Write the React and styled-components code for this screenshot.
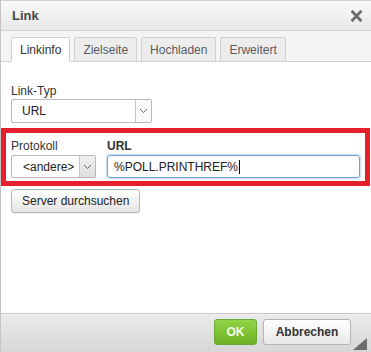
import React from "react";
import styled, { createGlobalStyle } from "styled-components";

const Global = createGlobalStyle`
  html, body { margin: 0; padding: 0; background: #fff; }
  body { font-family: "Liberation Sans", Arial, sans-serif; font-size: 12px; color: #333; }
  * { box-sizing: border-box; }
`;

const Dialog = styled.div`
  position: relative;
  width: 371px;
  height: 352px;
  display: flex;
  flex-direction: column;
  border-left: 1px solid #c4c4c4;
  border-top: 1px solid #cfcfcf;
  background: #fff;
  overflow: hidden;
`;

const TitleBar = styled.div`
  height: 30px;
  flex: none;
  display: flex;
  align-items: center;
  justify-content: space-between;
  padding: 0 9px 0 11px;
  background: linear-gradient(#f9f9f9, #e8e8e8);
  border-bottom: 1px solid #d2d2d2;
`;

const Title = styled.div`
  font-weight: bold;
  font-size: 13px;
  color: #474747;
`;

const Close = styled.svg`
  width: 11px;
  height: 12px;
  display: block;
`;

const TabBar = styled.div`
  height: 31px;
  flex: none;
  display: flex;
  align-items: flex-end;
  gap: 4px;
  padding-left: 10px;
  background: #f4f4f4;
  border-bottom: 1px solid #d1d1d1;
`;

const Tab = styled.div`
  height: 25px;
  margin-bottom: -1px;
  padding: 0 8px;
  display: flex;
  align-items: center;
  font-size: 12px;
  border: 1px solid #d0d0d0;
  border-bottom-color: ${(p) => (p.$active ? "#fff" : "#d1d1d1")};
  background: ${(p) => (p.$active ? "#fff" : "#ededed")};
  color: ${(p) => (p.$active ? "#333" : "#5a5a5a")};
  border-radius: 2px 2px 0 0;
`;

const Body = styled.div`
  flex: 1;
  padding: 22px 11px 0 10px;
  display: flex;
  flex-direction: column;
  align-items: flex-start;
`;

const Label = styled.div`
  line-height: 14px;
  height: 14px;
  margin-bottom: ${(p) => p.$gap || 1}px;
  font-weight: ${(p) => (p.$bold ? "bold" : "normal")};
  color: #333;
`;

const SelectBox = styled.div`
  width: ${(p) => p.$w}px;
  height: ${(p) => p.$h || 24}px;
  display: flex;
  border: 1px solid #b8b8b8;
  border-radius: 2px;
  background: #fff;
`;

const SelectText = styled.div`
  flex: 1;
  display: flex;
  align-items: center;
  padding-left: ${(p) => p.$pad || 10}px;
  color: #222;
`;

const Arrow = styled.div`
  width: 16px;
  display: flex;
  align-items: center;
  justify-content: center;
  border-left: 1px solid #c6c6c6;
  background: ${(p) => (p.$gray ? "linear-gradient(#efefef, #dedede)" : "#fafafa")};
`;

const Row = styled.div`
  position: relative;
  margin-top: 16px;
  width: 100%;
  display: flex;
  gap: 11px;
`;

const Field = styled.div`
  display: flex;
  flex-direction: column;
  flex: ${(p) => (p.$grow ? 1 : "none")};
`;

const Highlight = styled.div`
  position: absolute;
  left: -10px;
  right: -10px;
  top: -11px;
  bottom: -8px;
  border: 5px solid #e4202c;
  pointer-events: none;
`;

const Input = styled.div`
  height: 23px;
  display: flex;
  align-items: center;
  padding-left: 6px;
  border: 1px solid #6f9fd3;
  border-radius: 3px;
  box-shadow: 0 0 2px 1px rgba(120, 170, 225, 0.45);
  color: #222;
`;

const Caret = styled.span`
  display: inline-block;
  width: 1px;
  height: 14px;
  background: #000;
  margin-left: 1px;
`;

const Button = styled.div`
  margin-top: 11px;
  height: 24px;
  padding: 0 10px;
  display: flex;
  align-items: center;
  border: 1px solid #b6b6b6;
  border-radius: 3px;
  background: linear-gradient(#ffffff, #e4e4e4);
  box-shadow: 0 1px 0 rgba(0, 0, 0, 0.06);
  color: #222;
`;

const Footer = styled.div`
  position: relative;
  height: 39px;
  flex: none;
  display: flex;
  justify-content: flex-end;
  align-items: flex-start;
  gap: 6px;
  padding: 5px 20px 0 0;
  border-top: 1px solid #c6c6c6;
  box-shadow: inset 0 1px 0 #f0f0f0;
  background: linear-gradient(#ebebeb, #d7d7d7);
`;

const FooterButton = styled.div`
  height: 26px;
  width: ${(p) => p.$w}px;
  display: flex;
  align-items: center;
  justify-content: center;
  font-weight: bold;
  font-size: 12px;
  border-radius: 3px;
  border: 1px solid ${(p) => (p.$primary ? "#6aa935" : "#b5b5b5")};
  background: ${(p) =>
    p.$primary ? "linear-gradient(#92d447, #6cb123)" : "linear-gradient(#ffffff, #e8e8e8)"};
  color: ${(p) => (p.$primary ? "#f4ffe8" : "#333")};
`;

const Resizer = styled.svg`
  position: absolute;
  right: 4px;
  bottom: 2px;
  width: 14px;
  height: 12px;
`;

function Chevron() {
  return (
    <svg width="9" height="6" viewBox="0 0 9 6">
      <polyline points="1,1 4.5,4.5 8,1" fill="none" stroke="#666" strokeWidth="1" />
    </svg>
  );
}

export default function App() {
  return (
    <>
      <Global />
      <Dialog>
        <TitleBar>
          <Title>Link</Title>
          <Close viewBox="0 0 11 12">
            <path d="M1.5 1.8 L9.5 10.2 M9.5 1.8 L1.5 10.2" stroke="#6c6c6c" strokeWidth="2.8" strokeLinecap="square" />
          </Close>
        </TitleBar>
        <TabBar>
          <Tab $active>Linkinfo</Tab>
          <Tab>Zielseite</Tab>
          <Tab>Hochladen</Tab>
          <Tab>Erweitert</Tab>
        </TabBar>
        <Body>
          <Label>Link-Typ</Label>
          <SelectBox $w={141}>
            <SelectText $pad={10}>URL</SelectText>
            <Arrow>
              <Chevron />
            </Arrow>
          </SelectBox>
          <Row>
            <Highlight />
            <Field>
              <Label $gap={2}>Protokoll</Label>
              <SelectBox $w={85} $h={23}>
                <SelectText $pad={11}>&lt;andere&gt;</SelectText>
                <Arrow $gray>
                  <Chevron />
                </Arrow>
              </SelectBox>
            </Field>
            <Field $grow>
              <Label $gap={2} $bold>URL</Label>
              <Input>
                %POLL.PRINTHREF%
                <Caret />
              </Input>
            </Field>
          </Row>
          <Button>Server durchsuchen</Button>
        </Body>
        <Footer>
          <FooterButton $primary $w={43}>OK</FooterButton>
          <FooterButton $w={88}>Abbrechen</FooterButton>
          <Resizer viewBox="0 0 14 12">
            <polygon points="14,0 14,12 0,12" fill="#6b6b6b" />
          </Resizer>
        </Footer>
      </Dialog>
    </>
  );
}
